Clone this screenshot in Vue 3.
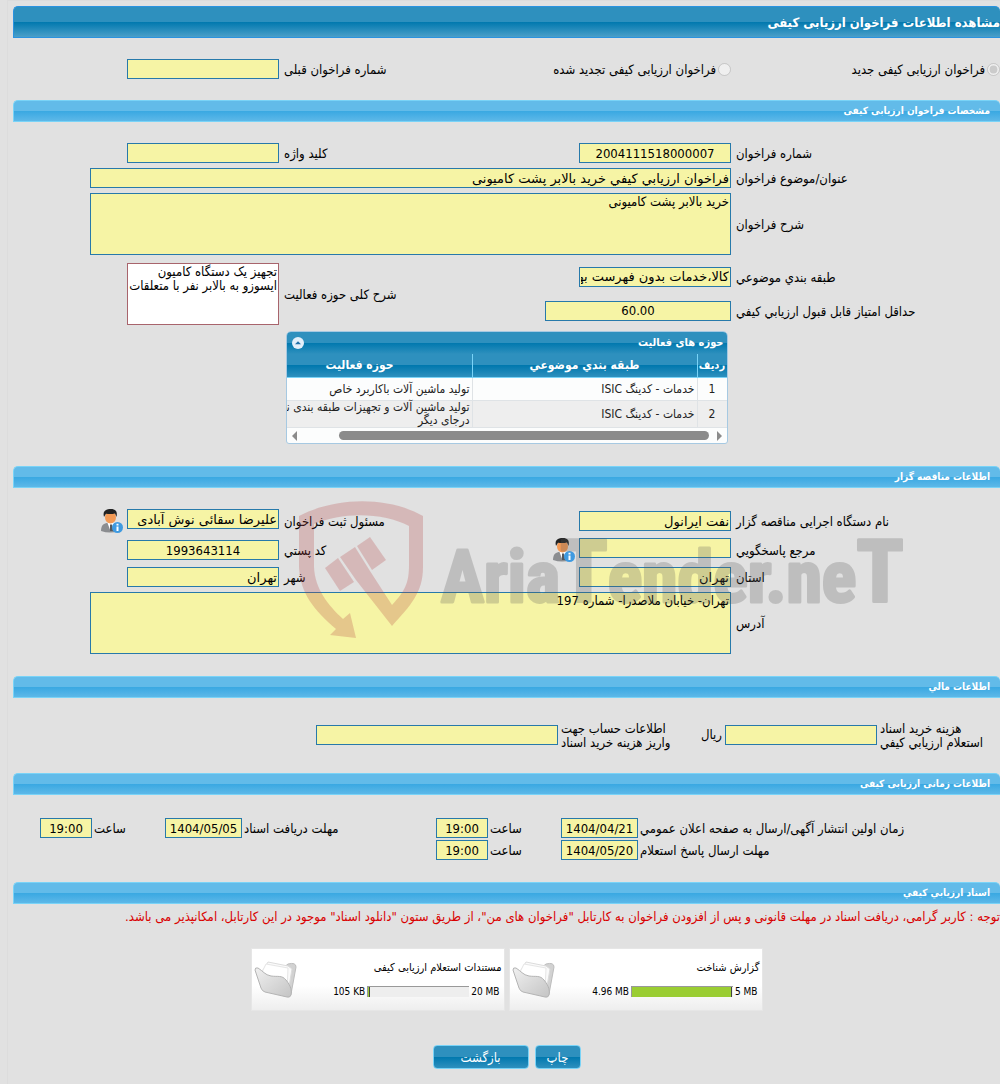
<template>
  <div class="page" dir="rtl">
    <h1 class="page-title">مشاهده اطلاعات فراخوان ارزیابی کیفی</h1>

    <!-- نوع فراخوان -->
    <div class="form-grid kind-row">
      <label class="radio-item">
        <input type="radio" name="kind" value="new" v-model="kind" disabled>
        <span>فراخوان ارزیابی کیفی جدید</span>
      </label>
      <label class="radio-item">
        <input type="radio" name="kind" value="renewed" v-model="kind" disabled>
        <span>فراخوان ارزیابی کیفی تجدید شده</span>
      </label>
      <label class="lbl" for="prevNo">شماره فراخوان قبلی</label>
      <input id="prevNo" class="field" type="text" readonly>
    </div>

    <!-- مشخصات فراخوان -->
    <h2 class="section-title">مشخصات فراخوان ارزیابی کیفی</h2>
    <div class="section-body">
      <div class="form-grid">
        <label class="lbl" for="callNo">شماره فراخوان</label>
        <input id="callNo" class="field center" type="text" :value="call.number" readonly>
        <label class="lbl" for="keyword">کلید واژه</label>
        <input id="keyword" class="field" type="text" readonly>

        <label class="lbl" for="subject">عنوان/موضوع فراخوان</label>
        <input id="subject" class="field wide" type="text" :value="call.subject" readonly>

        <label class="lbl" for="desc">شرح فراخوان</label>
        <textarea id="desc" class="field area wide" :value="call.desc" readonly></textarea>
      </div>

      <div class="form-grid class-grid">
        <label class="lbl" for="category">طبقه بندي موضوعي</label>
        <input id="category" class="field" type="text" :value="call.category" readonly>
        <label class="lbl tall" for="scope">شرح کلی حوزه فعالیت</label>
        <textarea id="scope" class="field area editable tall" v-model="call.scope"></textarea>

        <label class="lbl" for="minScore">حداقل امتیاز قابل قبول ارزيابي کيفي</label>
        <input id="minScore" class="field center full" type="text" :value="call.minScore" readonly>
      </div>

      <div class="panel">
        <div class="panel-head">
          <span>حوزه های فعالیت</span>
          <button class="collapse-btn" type="button" aria-label="بستن" @click="open = !open">
            <svg viewBox="0 0 12 12" width="12" height="12">
              <circle cx="6" cy="6" r="6" fill="#e3effa" />
              <path d="M3 7.2 6 4.2 9 7.2Z" fill="#1f6fa8" />
            </svg>
          </button>
        </div>
        <div v-if="open" class="table-clip">
          <table class="data-table">
            <colgroup>
              <col class="col-no">
              <col>
              <col>
            </colgroup>
            <thead>
              <tr>
                <th class="th-no">رديف</th>
                <th>طبقه بندي موضوعي</th>
                <th>حوزه فعاليت</th>
              </tr>
            </thead>
            <tbody>
              <tr v-for="(row, i) in activities" :key="i">
                <td class="td-no">{{ i + 1 }}</td>
                <td>{{ row.group }}</td>
                <td>{{ row.title }}</td>
              </tr>
            </tbody>
          </table>
        </div>
        <div v-if="open" class="scroll-bar">
          <span class="arrow arrow-right"></span>
          <span class="thumb"></span>
          <span class="arrow arrow-left"></span>
        </div>
      </div>
    </div>

    <!-- مناقصه گزار -->
    <h2 class="section-title">اطلاعات مناقصه گزار</h2>
    <div class="section-body owner">
      <div class="form-grid">
        <label class="lbl" for="org">نام دستگاه اجرایی مناقصه گزار</label>
        <input id="org" class="field" type="text" :value="owner.org" readonly>
        <label class="lbl" for="officer">مسئول ثبت فراخوان</label>
        <div class="with-icon">
          <input id="officer" class="field" type="text" :value="owner.officer" readonly>
          <button class="person-btn" type="button" aria-label="اطلاعات مسئول">
            <svg viewBox="0 0 22 24" width="22" height="24">
              <path d="M0 22C0 16 3 14 7 14h5c4 .5 6 3 6 8q-9 3-18 0Z" fill="#8b8d90" />
              <path d="M6.500 14 9.500 22l4-8Z" fill="#fff" />
              <path d="M9 15.500h2l1 6.500h-3Z" fill="#55585c" />
              <ellipse cx="9.500" cy="8.500" rx="5.500" ry="6" fill="#f39a55" />
              <path d="M3 8C1 1 6 0 10 0s7 2 5.500 8l-1.500-3.500c-3 .8-6 .7-9 .3Z" fill="#222" />
              <circle cx="16.500" cy="18.500" r="5.500" fill="#3f9ae0" />
              <path d="M15.500 17.500h2v4.500h-2ZM15.500 14.800h2v1.700h-2Z" fill="#fff" />
            </svg>
          </button>
        </div>

        <label class="lbl" for="ref">مرجع پاسخگويي</label>
        <div class="with-icon">
          <input id="ref" class="field" type="text" readonly>
          <button class="person-btn" type="button" aria-label="اطلاعات مرجع">
            <svg viewBox="0 0 22 24" width="22" height="24">
              <path d="M0 22C0 16 3 14 7 14h5c4 .5 6 3 6 8q-9 3-18 0Z" fill="#8b8d90" />
              <path d="M6.500 14 9.500 22l4-8Z" fill="#fff" />
              <path d="M9 15.500h2l1 6.500h-3Z" fill="#55585c" />
              <ellipse cx="9.500" cy="8.500" rx="5.500" ry="6" fill="#f39a55" />
              <path d="M3 8C1 1 6 0 10 0s7 2 5.500 8l-1.500-3.500c-3 .8-6 .7-9 .3Z" fill="#222" />
              <circle cx="16.500" cy="18.500" r="5.500" fill="#3f9ae0" />
              <path d="M15.500 17.500h2v4.500h-2ZM15.500 14.800h2v1.700h-2Z" fill="#fff" />
            </svg>
          </button>
        </div>
        <label class="lbl" for="postal">کد پستي</label>
        <input id="postal" class="field center" type="text" :value="owner.postal" readonly>

        <label class="lbl" for="province">استان</label>
        <input id="province" class="field" type="text" :value="owner.province" readonly>
        <label class="lbl" for="city">شهر</label>
        <input id="city" class="field" type="text" :value="owner.city" readonly>

        <label class="lbl" for="address">آدرس</label>
        <textarea id="address" class="field area wide" :value="owner.address" readonly></textarea>
      </div>

      <!-- واترمارک روی فرم -->
      <svg class="watermark" viewBox="300 500 604 140" width="604" height="140" direction="ltr">
        <g fill="#b54141" fill-opacity=".25">
          <path d="M300 515C337 496 388 495 424 515V566C424 592 411 605 393 625L357 579 341 556 356 546 371 570 393 604C406 590 410 582 410 564V525C386 512 345 510 315 523V566C316 588 329 604 344 618L351 612 357 637 331 634 337 628C315 609 301 592 300 566Z" />
          <path d="M326 567 339 557 355 581 341 590Z" />
          <path d="M358 545 371 536 387 559 373 569Z" />
        </g>
        <text x="442" y="601" class="wm-text">Aria<tspan class="wm-cap">T</tspan>ender.ne<tspan class="wm-cap">T</tspan></text>
      </svg>
    </div>

    <!-- اطلاعات مالی -->
    <h2 class="section-title">اطلاعات مالي</h2>
    <div class="section-body money-grid">
      <label class="lbl" for="cost">هزینه خرید اسناد<br>استعلام ارزيابي کيفي</label>
      <input id="cost" class="field full" type="text" readonly>
      <span>ریال</span>
      <label class="lbl" for="account">اطلاعات حساب جهت<br>واریز هزینه خرید اسناد</label>
      <input id="account" class="field full" type="text" readonly>
    </div>

    <!-- اطلاعات زمانی -->
    <h2 class="section-title">اطلاعات زمانی ارزیابی کیفی</h2>
    <div class="section-body time-grid">
      <template v-for="t in times" :key="t.id">
        <label class="lbl" :class="{ first: t.first }" :for="t.id">{{ t.label }}</label>
        <input :id="t.id" class="field center full" type="text" :value="t.date" readonly>
        <label class="lbl" :for="t.id + 'Hour'">ساعت</label>
        <input :id="t.id + 'Hour'" class="field center full" type="text" :value="t.hour" readonly>
      </template>
    </div>

    <!-- اسناد -->
    <h2 class="section-title">اسناد ارزيابي کيفي</h2>
    <p class="notice">توجه : کاربر گرامی، دریافت اسناد در مهلت قانونی و پس از افزودن فراخوان به کارتابل "فراخوان های من"، از طریق ستون "دانلود اسناد" موجود در این کارتابل، امکانپذیر می باشد.</p>
    <div class="docs">
      <div v-for="doc in docs" :key="doc.title" class="doc-card">
        <div class="doc-info">
          <a class="doc-title" href="#">{{ doc.title }}</a>
          <div class="quota" dir="ltr">
            <span>{{ doc.used }}</span>
            <div class="bar"><div class="bar-fill" :style="{ width: doc.percent + '%' }"></div></div>
            <span>{{ doc.max }}</span>
          </div>
        </div>
        <svg class="folder" viewBox="0 0 44 38" width="44" height="38">
          <defs>
            <linearGradient id="fold" x1="0" y1="0" x2="1" y2="1">
              <stop offset="0" stop-color="#f0f0f0" />
              <stop offset="1" stop-color="#c4c4c4" />
            </linearGradient>
          </defs>
          <path d="M29 7 34 3q8-2 8 3L37 33q-1 4-4 2Z" fill="#d2d2d2" stroke="#bdbdbd" />
          <path d="M9 9 14 1 34 5 38 8 34 31 12 22Z" fill="#fafafa" stroke="#dcdcdc" />
          <path d="M8 11 12 3 34 7 33 30Z" fill="#fff" stroke="#e6e6e6" />
          <path d="M1 9q0-3 3-2c5 3 7 7 13 8 7 1 11-1 15 4 5 6 6 11 5 15q-1 3-4 2L11 31Q8 30 7 27Z" fill="url(#fold)" stroke="#b4b4b4" />
        </svg>
      </div>
    </div>

    <div class="actions">
      <button class="btn" type="button" @click="print">چاپ</button>
      <button class="btn btn-back" type="button" @click="goBack">بازگشت</button>
    </div>
  </div>
</template>

<script setup>
import { ref, reactive } from 'vue'

const kind = ref('new')
const open = ref(true)

const call = reactive({
  number: '2004111518000007',
  subject: 'فراخوان ارزيابي کيفي خرید بالابر پشت کامیونی',
  desc: 'خرید بالابر پشت کامیونی',
  category: 'کالا،خدمات بدون فهرست بها',
  scope: 'تجهیز یک دستگاه کامیون ایسوزو به بالابر نفر با متعلقات',
  minScore: '60.00'
})

const activities = [
  { group: 'خدمات - کدینگ ISIC', title: 'تولید ماشین آلات باکاربرد خاص' },
  { group: 'خدمات - کدینگ ISIC', title: 'تولید ماشین آلات و تجهیزات طبقه بندی نشده درجای دیگر' }
]

const owner = {
  org: 'نفت ایرانول',
  officer: 'علیرضا سقائی نوش آبادی',
  postal: '1993643114',
  province: 'تهران',
  city: 'تهران',
  address: 'تهران- خیابان ملاصدرا- شماره 197'
}

const times = [
  { id: 'publish', first: true, label: 'زمان اولین انتشار آگهی/ارسال به صفحه اعلان عمومي', date: '1404/04/21', hour: '19:00' },
  { id: 'receive', first: false, label: 'مهلت دریافت اسناد', date: '1404/05/05', hour: '19:00' },
  { id: 'answer', first: true, label: 'مهلت ارسال پاسخ استعلام', date: '1404/05/20', hour: '19:00' }
]

const docs = [
  { title: 'گزارش شناخت', used: '4.96 MB', max: '5 MB', percent: 99 },
  { title: 'مستندات استعلام ارزیابی کیفی', used: '105 KB', max: '20 MB', percent: 1 }
]

const print = () => window.print()
const goBack = () => window.history.back()
</script>

<style>
body {
  margin: 0;
  background: #e1e1e1;
}
</style>

<style scoped>
* { box-sizing: border-box; }
.page {
  margin-left: 7px;
  padding: 5px 0 15px 5px;
  border: 1px solid #dcdcdc;
  border-right: none;
  background: #e1e1e1;
  overflow: hidden;
  color: #000;
  font-family: "DejaVu Sans Condensed", "DejaVu Sans", sans-serif;
  font-size: 13px;
  line-height: 14px;
}
input, textarea, button { font-family: inherit; margin: 0; }

/* نوارهای عنوان */
.page-title {
  margin: 0;
  height: 32px;
  line-height: 32px;
  font-size: 13px;
  font-weight: bold;
  color: #fff;
  border: 1px solid #2a93e0;
  border-right: none;
  border-radius: 5px 5px 0 0;
  background: linear-gradient(#2e90be 0, #2e90be 50%, #0078ae 50%, #4a9fc9 100%);
}
.section-title {
  margin: 0;
  height: 22px;
  line-height: 20px;
  padding: 0 10px;
  font-size: 10px;
  font-weight: bold;
  color: #fff;
  border: 1px solid #79d3f7;
  border-right: none;
  border-radius: 5px 5px 0 0;
  background: linear-gradient(#62bbe9 0, #62bbe9 50%, #39a8e2 50%, #5db8e8 100%);
}
.section-body { padding: 21px 0 22px; }

/* شبکه فرم */
.form-grid {
  display: grid;
  grid-template-columns: 264fr 186fr 256fr 266fr;
  gap: 5px;
  align-items: center;
}
.kind-row { padding: 21px 0; }
.class-grid {
  margin-top: 7px;
  grid-auto-rows: 29px;
}
.tall { grid-row: span 2; }
.lbl {
  padding-top: 2px;
  text-align: left;
  white-space: nowrap;
}
.radio-item {
  display: flex;
  align-items: center;
  gap: 2px;
  white-space: nowrap;
}
.radio-item span { padding-top: 2px; }
.radio-item input {
  width: 13px;
  height: 13px;
  flex: none;
}

.field {
  width: 152px;
  height: 20px;
  padding: 0 1px;
  border: 1px solid #2779aa;
  border-radius: 0;
  background: #f6f4a5;
  color: #000;
  font-family: "DejaVu Sans", sans-serif;
  font-size: 13px;
  outline: none;
}
.field.center {
  font-family: "DejaVu Sans Condensed", "DejaVu Sans", sans-serif;
  text-align: center;
}
.field.full { width: 100%; }
.field.wide {
  grid-column: 2 / -1;
  width: 100%;
  max-width: 641px;
}
.field.area {
  display: block;
  height: 62px;
  padding: 1px;
  resize: none;
  overflow: hidden;
  font-family: "DejaVu Sans Condensed", "DejaVu Sans", sans-serif;
  line-height: 14px;
}
.field.editable {
  background: #fff;
  border-color: #a8646c;
}

/* جدول حوزه ها */
.panel {
  width: 442px;
  margin: 6px auto 0;
  border: 1px solid #a6c9e2;
  border-radius: 5px 5px 3px 3px;
  background: #fcfdfd;
  overflow: hidden;
}
.panel-head {
  display: flex;
  align-items: center;
  justify-content: space-between;
  height: 22px;
  padding: 0 3px 0 5px;
  font-size: 11px;
  font-weight: bold;
  color: #fff;
  background: linear-gradient(#2e90be 0, #2e90be 50%, #0078ae 50%, #2e90be 100%);
}
.collapse-btn {
  display: flex;
  padding: 0;
  border: none;
  background: none;
  cursor: pointer;
}
.table-clip { overflow: hidden; }
.data-table {
  width: 480px;
  table-layout: fixed;
  border-collapse: separate;
  border-spacing: 0;
  font-size: 12px;
  line-height: 13px;
  color: #222;
}
.col-no { width: 30px; }
.data-table th {
  height: 24px;
  padding: 0;
  font-size: 12px;
  font-weight: bold;
  color: #fff;
  white-space: nowrap;
  border-bottom: 1px solid #79d3f7;
  border-left: 1px solid #79d3f7;
  background: linear-gradient(#2e90be 0, #2e90be 50%, #0078ae 50%, #2e90be 100%);
}
.data-table th.th-no { font-size: 11px; }
.data-table td {
  height: 23px;
  padding: 0 2px;
  border-bottom: 1px solid #dfe3e6;
  border-left: 1px solid #dfe3e6;
  background: #fcfdfd;
}
.data-table td.td-no { text-align: center; }
.data-table tr:nth-child(even) td {
  height: 27px;
  background: #eeeeee;
}
.scroll-bar {
  display: flex;
  align-items: center;
  height: 15px;
  padding: 0 5px;
}
.thumb {
  width: 370px;
  height: 9px;
  margin: 0 8px 0 40px;
  border-radius: 5px;
  background: #8b8b8b;
}
.arrow {
  border: 5px solid transparent;
  border-width: 5px 0;
}
.arrow-right { border-left: 5px solid #8b8b8b; }
.arrow-left {
  margin-right: auto;
  border-right: 5px solid #8b8b8b;
}

/* مناقصه گزار */
.owner { position: relative; }
.with-icon {
  display: flex;
  align-items: flex-start;
  gap: 4px;
}
.person-btn {
  display: flex;
  flex: none;
  padding: 0;
  border: none;
  background: none;
  cursor: pointer;
}
.watermark {
  position: absolute;
  top: 13px;
  left: 29%;
  pointer-events: none;
}
.wm-text {
  font-family: "Roboto Condensed", Roboto, sans-serif;
  font-size: 72px;
  font-weight: bold;
  fill: #5a5a5a;
  stroke: #5a5a5a;
  stroke-width: 3px;
  stroke-linejoin: round;
  opacity: .25;
}
.wm-cap { font-size: 88px; }

/* مالی و زمانی */
.money-grid {
  display: grid;
  grid-template-columns: 120fr 152px 48fr 110px 242px 300fr;
  grid-auto-rows: 32px;
  gap: 3px;
  align-items: center;
}
.time-grid {
  display: grid;
  grid-template-columns: 360fr 77px 69fr 52px 190fr 77px 69fr 52px 25fr;
  grid-auto-rows: 22px;
  column-gap: 2px;
  align-items: end;
}
.time-grid .lbl { line-height: 18px; }
.time-grid .first { grid-column: 1; }

/* اسناد */
.notice {
  margin: 5px 0 0;
  line-height: 16px;
  color: #d90000;
  white-space: nowrap;
}
.docs {
  display: flex;
  justify-content: center;
  gap: 4px;
  margin-top: 23px;
}
.doc-card {
  display: flex;
  align-items: center;
  justify-content: space-between;
  width: 254px;
  height: 63px;
  padding: 0 2px;
  border: 1px solid #e6e6e6;
  background: linear-gradient(#fff 60%, #eeeeee 100%);
}
.doc-info {
  display: flex;
  flex-direction: column;
  gap: 10px;
  font-size: 10px;
}
.doc-title {
  font-size: 11px;
  color: #000;
  text-decoration: none;
}
.quota {
  display: flex;
  align-items: center;
  justify-content: flex-end;
  gap: 2px;
  padding-right: 2px;
}
.bar {
  width: 102px;
  height: 11px;
  border: 1px solid #999;
  border-width: 1px 0 0 1px;
  background: #eee;
}
.bar-fill {
  height: 100%;
  min-width: 2px;
  border-right: 1px solid #444;
  background: #9acd32;
}
.actions {
  display: flex;
  justify-content: center;
  gap: 6px;
  margin-top: 34px;
}
.btn {
  width: 46px;
  height: 24px;
  padding: 0;
  border: 1px solid #79d3f7;
  border-radius: 4px;
  font-size: 13px;
  color: #fff;
  cursor: pointer;
  background: linear-gradient(#2e90be 0, #2e90be 50%, #0078ae 50%, #2e90be 100%);
}
.btn-back { width: 96px; }
</style>
